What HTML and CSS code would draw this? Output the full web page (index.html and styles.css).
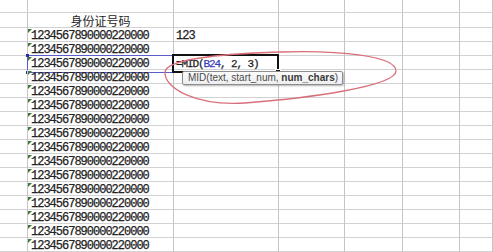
FILE: index.html
```html
<!DOCTYPE html>
<html lang="zh">
<head>
<meta charset="utf-8">
<title>身份证号码</title>
<link rel="stylesheet" href="styles.css">
</head>
<body>
<div class="sheet">
  <div class="row top"><i></i><i></i><i></i><i></i><i></i><i></i><i></i></div>
  <div class="row head"><i></i><div class="cell hdr">身份证号码</div><i></i><i></i><i></i><i></i><i></i></div>
  <div class="row"><i></i><div class="cell id"><span class="flag"></span>1234567890000220000</div><div class="cell num">123</div><i></i><i></i><i></i><i></i></div>
  <div class="row"><i></i><div class="cell id"><span class="flag"></span>1234567890000220000</div><i></i><i></i><i></i><i></i><i></i></div>
  <div class="row"><i></i><div class="cell id"><span class="flag"></span>1234567890000220000<span class="ref"><b class="h ht"></b><b class="h hb"></b></span></div><div class="cell edit"><span class="box"><b class="grip"></b></span><span class="formula">=MID(<span class="arg">B24</span>, 2, 3)</span><div class="tip">MID(text, start_num, <b>num_chars</b>)</div></div><i></i><i></i><i></i><i></i></div>
  <div class="row"><i></i><div class="cell id"><span class="flag"></span>1234567890000220000</div><i></i><i></i><i></i><i></i><i></i></div>
  <div class="row"><i></i><div class="cell id"><span class="flag"></span>1234567890000220000</div><i></i><i></i><i></i><i></i><i></i></div>
  <div class="row"><i></i><div class="cell id"><span class="flag"></span>1234567890000220000</div><i></i><i></i><i></i><i></i><i></i></div>
  <div class="row"><i></i><div class="cell id"><span class="flag"></span>1234567890000220000</div><i></i><i></i><i></i><i></i><i></i></div>
  <div class="row"><i></i><div class="cell id"><span class="flag"></span>1234567890000220000</div><i></i><i></i><i></i><i></i><i></i></div>
  <div class="row"><i></i><div class="cell id"><span class="flag"></span>1234567890000220000</div><i></i><i></i><i></i><i></i><i></i></div>
  <div class="row"><i></i><div class="cell id"><span class="flag"></span>1234567890000220000</div><i></i><i></i><i></i><i></i><i></i></div>
  <div class="row"><i></i><div class="cell id"><span class="flag"></span>1234567890000220000</div><i></i><i></i><i></i><i></i><i></i></div>
  <div class="row"><i></i><div class="cell id"><span class="flag"></span>1234567890000220000</div><i></i><i></i><i></i><i></i><i></i></div>
  <div class="row"><i></i><div class="cell id"><span class="flag"></span>1234567890000220000</div><i></i><i></i><i></i><i></i><i></i></div>
  <div class="row"><i></i><div class="cell id"><span class="flag"></span>1234567890000220000</div><i></i><i></i><i></i><i></i><i></i></div>
  <div class="row"><i></i><div class="cell id"><span class="flag"></span>1234567890000220000</div><i></i><i></i><i></i><i></i><i></i></div>
  <div class="row"><i></i><div class="cell id"><span class="flag"></span>1234567890000220000</div><i></i><i></i><i></i><i></i><i></i></div>
  <svg class="mark" width="493" height="252" viewBox="0 0 493 252">
    <path d="M165,72 C166,60 215,54 280,52 C340,50 396,56 396,71 C396,86 310,98 245,103 C195,106 164,88 165,72 Z" fill="none" stroke="#d8707c" stroke-width="1.3"/>
  </svg>
</div>
</body>
</html>
```
FILE: styles.css
```css
html, body {
  margin: 0;
  padding: 0;
  background: #fff;
  overflow: hidden;
}

.sheet {
  position: relative;
  width: 493px;
  height: 252px;
  overflow: hidden;
  font-family: "Liberation Mono", monospace;
  color: #222;
}

.row {
  display: grid;
  grid-template-columns: 28px 146px 105px 66px 58px 57px 33px;
  height: 14px;
  box-sizing: border-box;
  border-bottom: 1px solid #d2d2d2;
}

.row.top {
  height: 13px;
}

.row.head {
  height: 15px;
}

.row > i,
.cell {
  display: block;
  position: relative;
  height: 100%;
  box-sizing: border-box;
  border-right: 1px solid #c4c4c4;
  min-width: 0;
}

.cell {
  font-size: 12px;
  letter-spacing: -1px;
  line-height: 16px;
  padding-left: 3px;
  white-space: nowrap;
  -webkit-text-stroke: 0.25px #222;
}

.hdr {
  font-family: "Noto Sans CJK SC", "Liberation Sans", sans-serif;
  font-size: 12px;
  letter-spacing: 0;
  line-height: 15px;
  text-align: center;
  padding-left: 0;
  color: #1e1e1e;
  -webkit-text-stroke: 0;
}

.num {
  padding-left: 2px;
}

.flag {
  position: absolute;
  top: 1px;
  left: 0;
  width: 0;
  height: 0;
  border-top: 4px solid #3a7a3a;
  border-right: 4px solid transparent;
}

.ref {
  position: absolute;
  left: -1px;
  top: -1px;
  right: -1px;
  bottom: -1px;
  border: 1px solid #5d5dc9;
}

.ref .h {
  position: absolute;
  left: -2px;
  width: 3px;
  height: 3px;
  background: #2c2ca6;
}

.ref .ht { top: -2px; }
.ref .hb { bottom: -2px; }

.edit {
  padding-left: 2px;
  z-index: 2;
}

.box {
  position: absolute;
  left: -2px;
  top: -2px;
  right: -1px;
  bottom: -1px;
  border: 2px solid #111;
}

.grip {
  position: absolute;
  right: -4px;
  bottom: -4px;
  width: 4px;
  height: 4px;
  background: #111;
  border: 1px solid #fff;
}

.formula {
  position: relative;
  font-size: 11px;
  letter-spacing: -1.1px;
  color: #1a1a1a;
}

.arg {
  color: #3a3ab8;
  -webkit-text-stroke: 0.25px #3a3ab8;
}

.tip {
  position: absolute;
  left: 8px;
  top: 15px;
  height: 12px;
  padding: 0 4px 0 5px;
  border: 1px solid #8c8c8c;
  border-radius: 2px;
  background: linear-gradient(#fbfbfb, #eeeef0);
  box-shadow: 1px 1px 2px rgba(0, 0, 0, 0.3);
  font-family: "Liberation Sans", sans-serif;
  font-size: 10px;
  letter-spacing: 0;
  line-height: 12px;
  color: #4a4a4a;
  white-space: nowrap;
  -webkit-text-stroke: 0;
}

.tip b {
  font-weight: bold;
  color: #3a3a3a;
}

.mark {
  position: absolute;
  left: 0;
  top: 0;
  z-index: 3;
  pointer-events: none;
}
```
